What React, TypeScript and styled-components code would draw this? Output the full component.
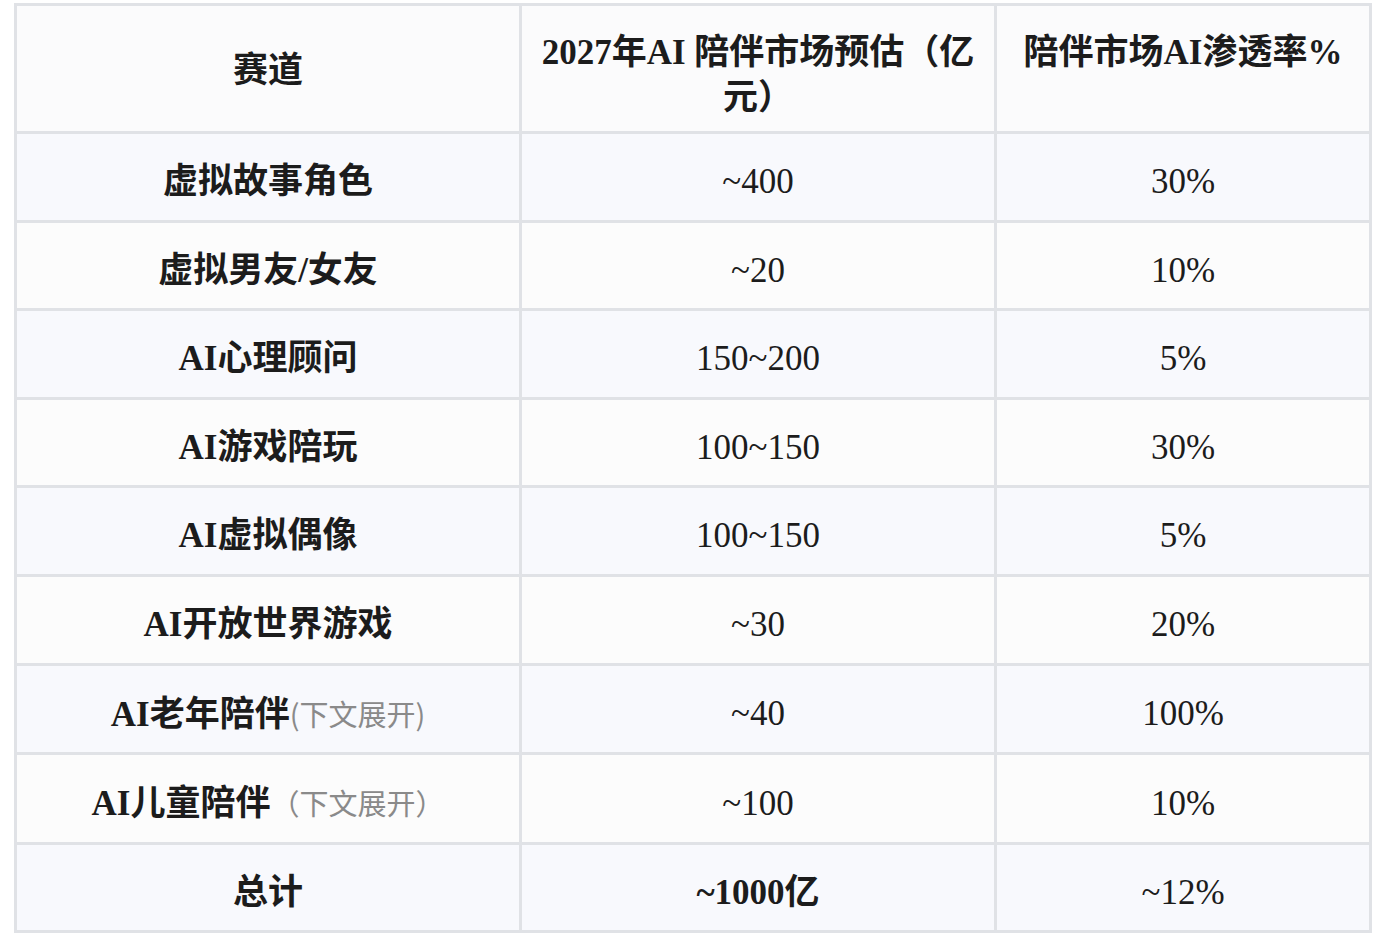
import styled, { createGlobalStyle } from 'styled-components'

const GlobalStyle = createGlobalStyle`
  html, body {
    margin: 0;
    padding: 0;
    background: #ffffff;
  }
  body {
    padding: 3px 0 0 14px;
    font-family: "Liberation Serif", "Noto Sans CJK SC", serif;
    color: #1c1c1c;
  }
`

const Table = styled.table`
  width: 1355px;
  table-layout: fixed;
  border-collapse: collapse;
  border: 3px solid #e0e2e6;
  font-size: 35px;
  line-height: 45px;
`

const HeadCell = styled.th<{ $middle?: boolean }>`
  border: 3px solid #e0e2e6;
  background: #fbfbfc;
  padding: ${({ $middle }) => ($middle ? '19px 12px 16px' : '24px 12px 11px')};
  text-align: center;
  vertical-align: ${({ $middle }) => ($middle ? 'middle' : 'top')};
  font-weight: 700;
`

const Row = styled.tr<{ $odd: boolean }>`
  background: ${({ $odd }) => ($odd ? '#f8f9fd' : '#fcfcfc')};
`

const Cell = styled.td<{ $strong?: boolean }>`
  border: 3px solid #e0e2e6;
  padding: 25px 12px 15.6px;
  text-align: center;
  vertical-align: middle;
  font-weight: ${({ $strong }) => ($strong ? 700 : 400)};
  white-space: nowrap;
`

const Note = styled.span`
  font-family: "Noto Sans CJK SC", sans-serif;
  font-weight: 400;
  font-size: 29px;
  color: #8a8a8a;
`

interface RowData {
  name: string
  note?: string
  market: string
  rate: string
  strongMarket?: boolean
}

const rows: RowData[] = [
  { name: '虚拟故事角色', market: '~400', rate: '30%' },
  { name: '虚拟男友/女友', market: '~20', rate: '10%' },
  { name: 'AI心理顾问', market: '150~200', rate: '5%' },
  { name: 'AI游戏陪玩', market: '100~150', rate: '30%' },
  { name: 'AI虚拟偶像', market: '100~150', rate: '5%' },
  { name: 'AI开放世界游戏', market: '~30', rate: '20%' },
  { name: 'AI老年陪伴', note: '(下文展开)', market: '~40', rate: '100%' },
  { name: 'AI儿童陪伴', note: '（下文展开）', market: '~100', rate: '10%' },
  { name: '总计', market: '~1000亿', rate: '~12%', strongMarket: true },
]

export default function App() {
  return (
    <>
      <GlobalStyle />
      <Table>
        <colgroup>
          <col style={{ width: 505 }} />
          <col style={{ width: 475 }} />
          <col style={{ width: 375 }} />
        </colgroup>
        <thead>
          <tr>
            <HeadCell $middle>赛道</HeadCell>
            <HeadCell>2027年AI 陪伴市场预估（亿元）</HeadCell>
            <HeadCell>陪伴市场AI渗透率%</HeadCell>
          </tr>
        </thead>
        <tbody>
          {rows.map((r, i) => (
            <Row key={r.name} $odd={i % 2 === 0}>
              <Cell $strong>
                {r.name}
                {r.note && <Note>{r.note}</Note>}
              </Cell>
              <Cell $strong={r.strongMarket}>{r.market}</Cell>
              <Cell>{r.rate}</Cell>
            </Row>
          ))}
        </tbody>
      </Table>
    </>
  )
}
